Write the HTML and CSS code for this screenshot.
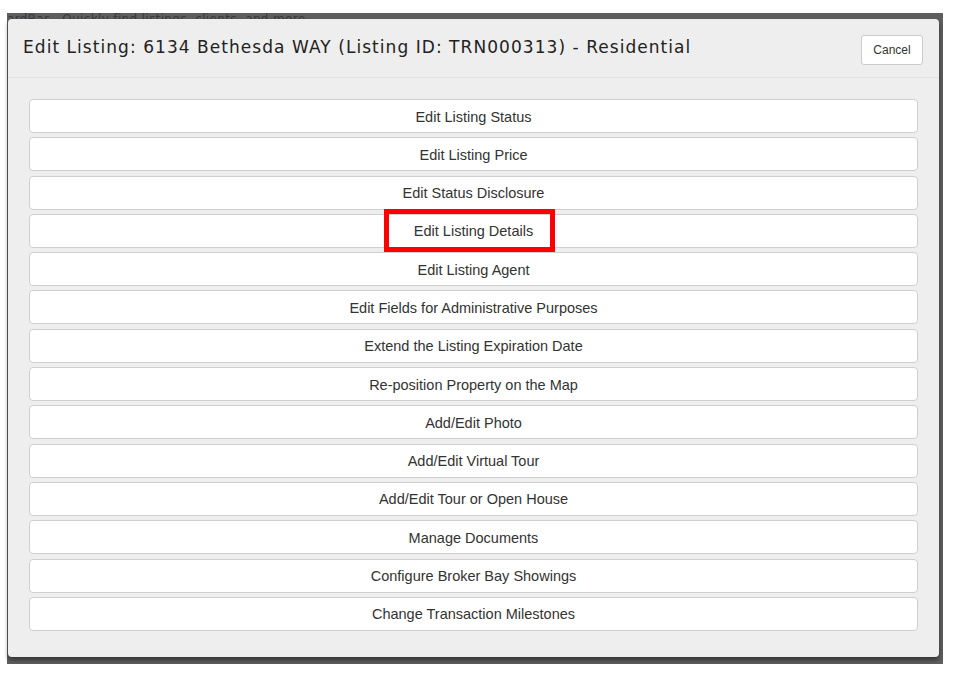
FILE: index.html
```html
<!DOCTYPE html>
<html>
<head>
<meta charset="utf-8">
<link rel="stylesheet" href="styles.css">
</head>
<body>
<div class="backdrop">
  <div class="topbar">ardBar - Quickly find listings, clients, and more</div>
  <div class="modal">
    <div class="modal-header">
      <h1 class="title">Edit Listing: 6134 Bethesda WAY (Listing ID: TRN000313) - Residential</h1>
      <button class="cancel">Cancel</button>
    </div>
    <div class="modal-body">
      <button class="item">Edit Listing Status</button>
      <button class="item">Edit Listing Price</button>
      <button class="item">Edit Status Disclosure</button>
      <button class="item item-hl">Edit Listing Details</button>
      <button class="item">Edit Listing Agent</button>
      <button class="item">Edit Fields for Administrative Purposes</button>
      <button class="item">Extend the Listing Expiration Date</button>
      <button class="item">Re-position Property on the Map</button>
      <button class="item">Add/Edit Photo</button>
      <button class="item">Add/Edit Virtual Tour</button>
      <button class="item">Add/Edit Tour or Open House</button>
      <button class="item">Manage Documents</button>
      <button class="item">Configure Broker Bay Showings</button>
      <button class="item">Change Transaction Milestones</button>
    </div>
  </div>
</div>
</body>
</html>
```
FILE: styles.css
```css
html, body {
  margin: 0;
  padding: 0;
  background: #fff;
  width: 956px;
  height: 676px;
  overflow: hidden;
}
.backdrop {
  margin: 13px 13px 0 7px;
  height: 651px;
  background: #5e5e5e;
  display: flex;
  flex-direction: column;
  padding-left: 1px;
  padding-right: 4px;
}
.topbar {
  height: 6px;
  overflow: hidden;
  font-family: "DejaVu Sans", Verdana, sans-serif;
  font-size: 12px;
  letter-spacing: 0.35px;
  line-height: 13px;
  color: #3a3a3a;
  white-space: nowrap;
  margin-left: -1px;
  margin-top: -1px;
  padding-top: 1px;
}
.modal {
  background: #eeeeee;
  border-radius: 4px;
  box-shadow: 0 3px 4px rgba(0,0,0,0.45);
  height: 638px;
  display: flex;
  flex-direction: column;
}
.modal-header {
  height: 58px;
  border-bottom: 1px solid #e2e2e2;
  display: flex;
  align-items: flex-start;
  justify-content: space-between;
  padding: 0 16px 0 15px;
}
.title {
  margin: 17px 0 0 0;
  font-family: "DejaVu Sans", Verdana, sans-serif;
  font-weight: normal;
  font-size: 17px;
  letter-spacing: 1.05px;
  line-height: 22px;
  color: #222;
  white-space: nowrap;
}
.cancel {
  margin-top: 16px;
  width: 62px;
  height: 30px;
  background: #fff;
  border: 1px solid #ccc;
  border-radius: 3px;
  font-family: "Liberation Sans", Arial, sans-serif;
  font-size: 12px;
  color: #333;
  padding: 0;
}
.modal-body {
  padding: 21px 21px 0 21px;
  display: flex;
  flex-direction: column;
  gap: 4.3px;
}
.item {
  height: 34px;
  background: #fff;
  border: 1px solid #cfcfcf;
  border-radius: 4px;
  font-family: "Liberation Sans", Arial, sans-serif;
  font-size: 14.5px;
  color: #333;
  text-align: center;
  padding: 1px 0 0 0;
  position: relative;
}
.item-hl::after {
  content: "";
  position: absolute;
  left: calc(50% - 90px);
  width: 171px;
  top: -6px;
  height: 43px;
  box-sizing: border-box;
  border: 5px solid #ff0000;
}
```
